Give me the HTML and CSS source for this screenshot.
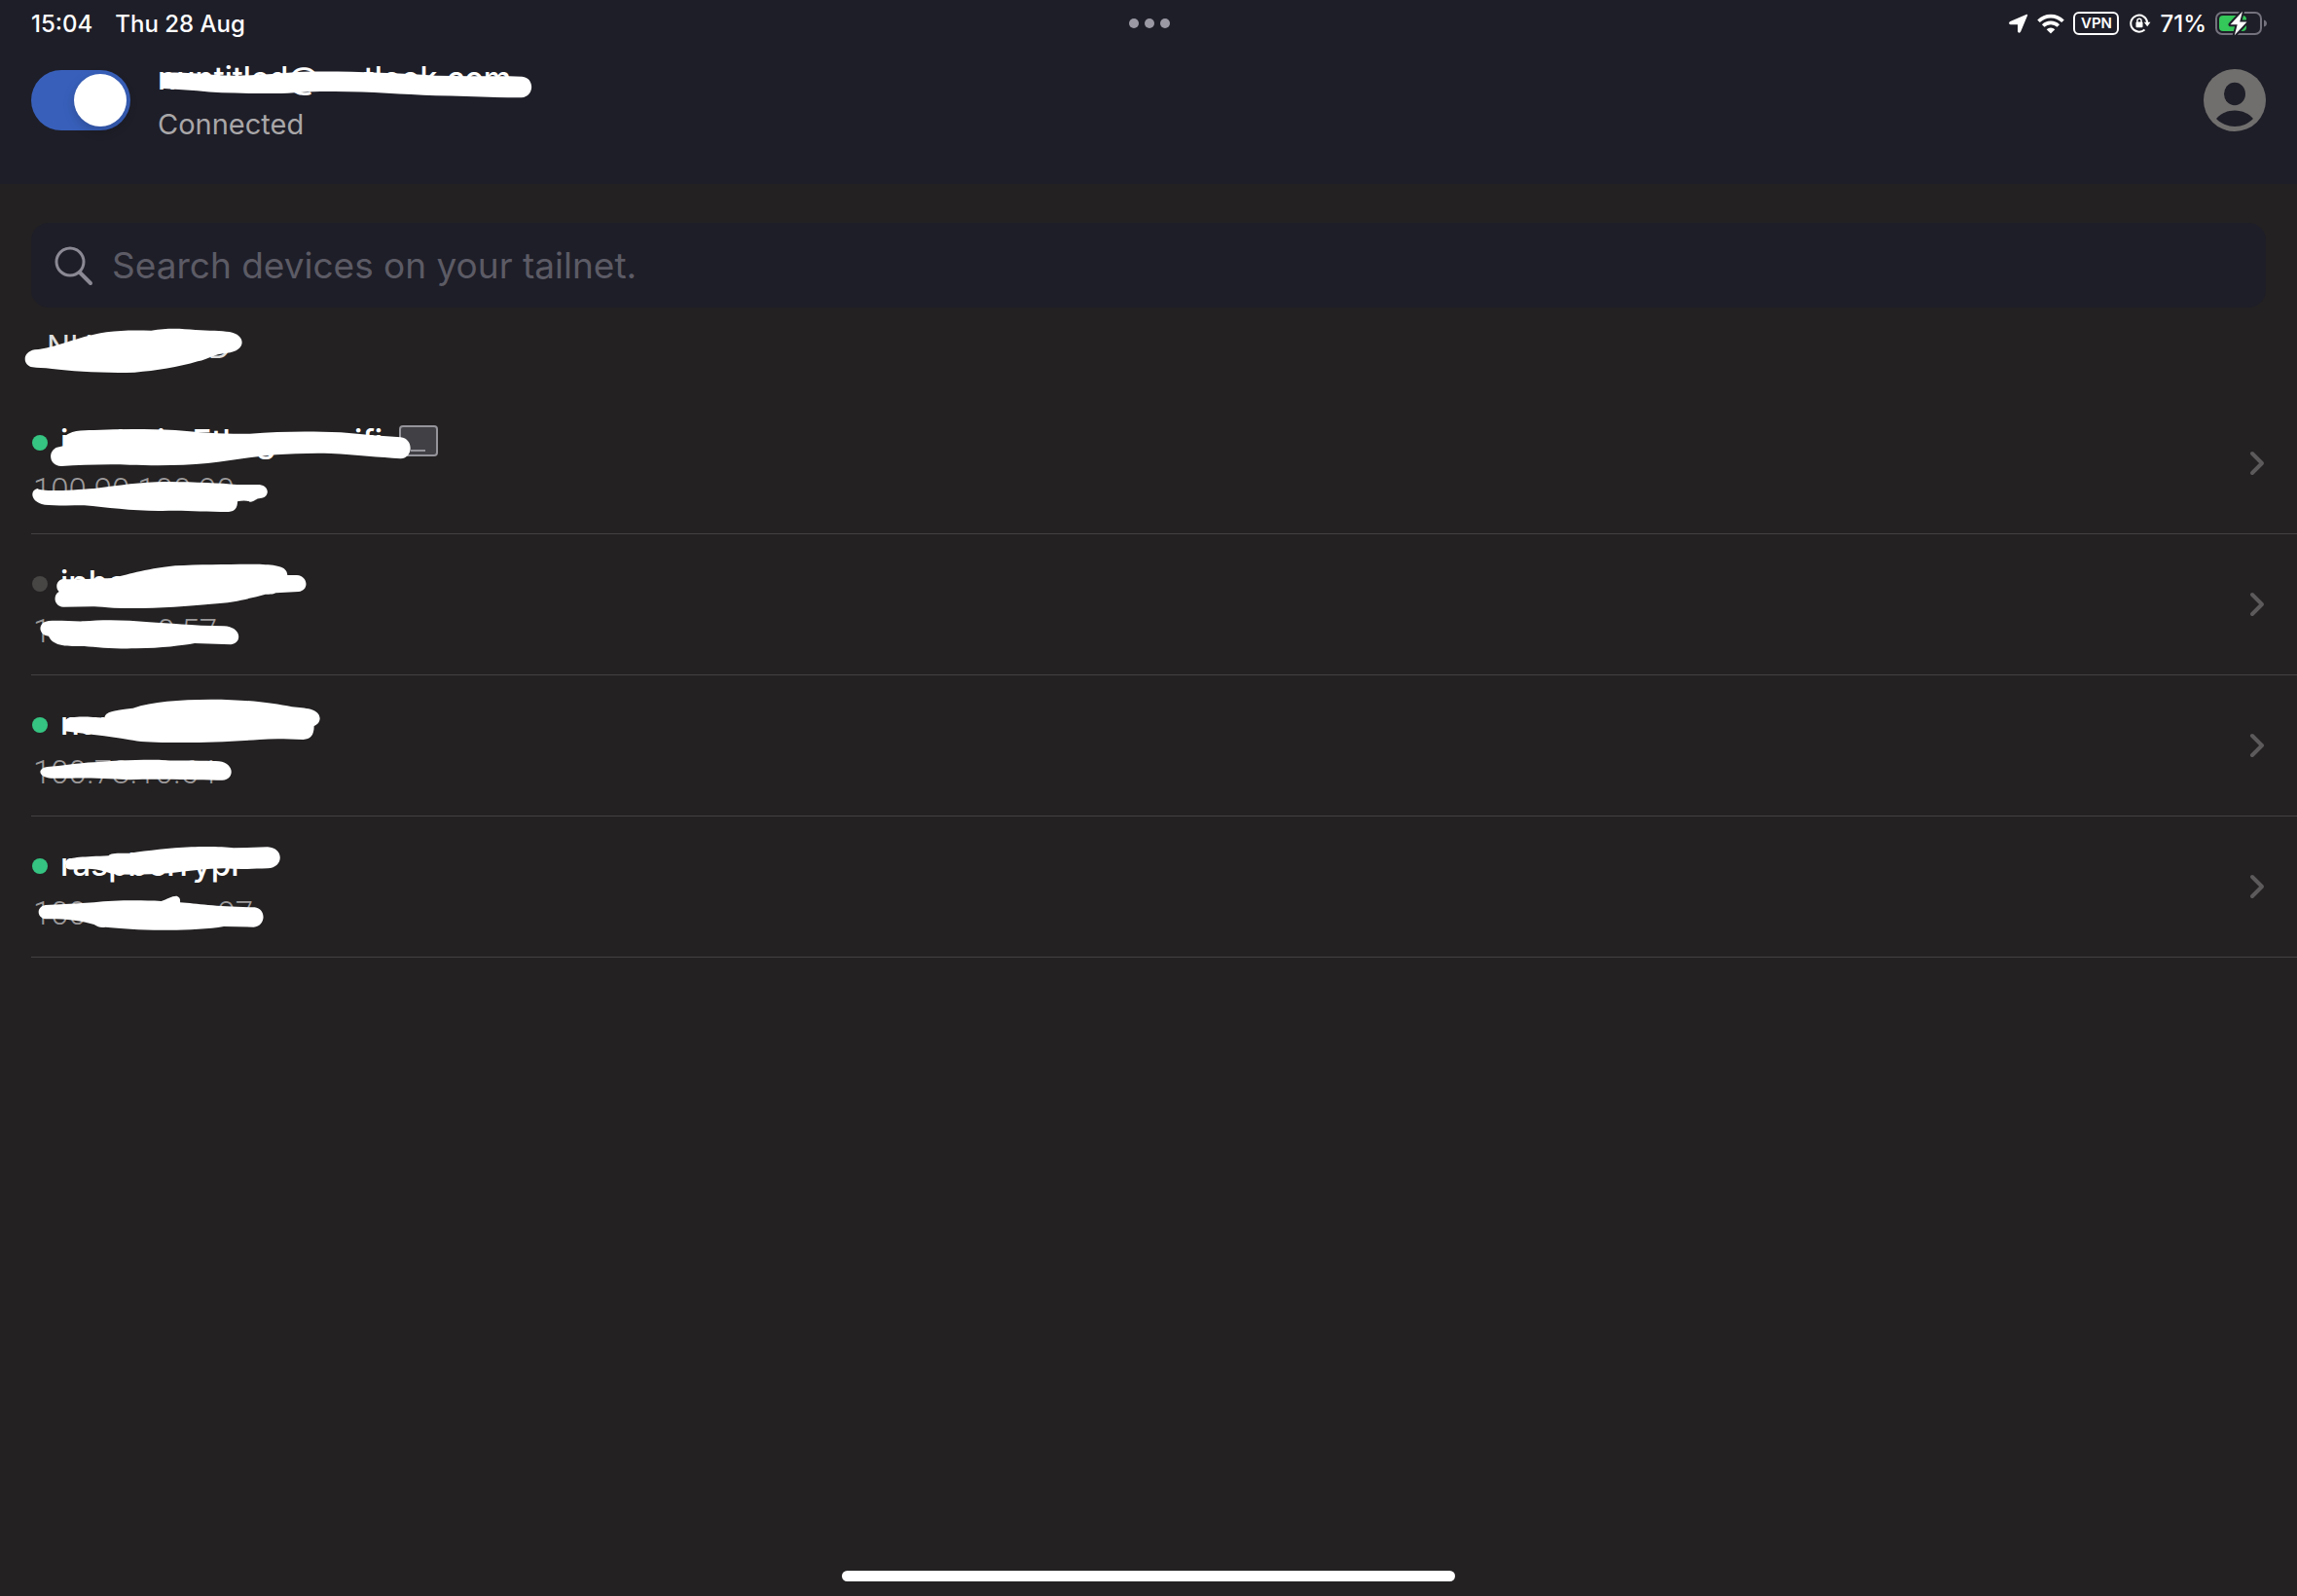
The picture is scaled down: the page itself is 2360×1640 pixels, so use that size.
FILE: index.html
```html
<!DOCTYPE html>
<html lang="en">
<head>
    <meta charset="utf-8">
    <meta name="viewport" content="width=device-width, initial-scale=1">
    <title>Devices</title>
    <link rel="stylesheet" href="styles.css">
</head>
<body>
    <header class="header">
        <div class="status">
            <div class="status-left"><span>15:04</span><span>Thu 28 Aug</span></div>
            <div class="dots"><i></i><i></i><i></i></div>
            <div class="status-right">
                <svg class="ic-location" width="20" height="20" viewBox="0 0 20 20"><path d="M18.500 1.500 11.500 18.300c-.4 1-1.800 .8-1.800-.3V10.500H1.900C.6 10.500.5 9.200 1.600 8.700z" fill="#fff" stroke="#fff" stroke-width="1.400" stroke-linejoin="round"/></svg>
                <svg class="ic-wifi" width="28" height="21" viewBox="0 0 28 21"><g fill="none" stroke="#fff" stroke-width="3.600"><path d="M1.500 7.800a17.600 17.600 0 0 1 25 0"/><path d="M6.200 12.600a11 11 0 0 1 15.600 0"/></g><path d="M14 20.500l-4.300-4.300a6.200 6.200 0 0 1 8.600 0z" fill="#fff"/></svg>
                <span class="vpn">VPN</span>
                <svg class="ic-lock" width="22" height="20" viewBox="0 0 22 20"><path d="M15.500 16.400A8.500 8.500 0 1 1 18.200 9" fill="none" stroke="#fff" stroke-width="2"/><path d="M14.800 8.800h6.700l-3.300 4.500z" fill="#fff"/><rect x="6.500" y="8.500" width="7" height="5.800" rx="1" fill="#fff"/><path d="M7.900 9V7.400a2.100 2.100 0 0 1 4.200 0V9" fill="none" stroke="#fff" stroke-width="1.400"/></svg>
                <span class="percent">71%</span>
                <svg class="ic-battery" width="54" height="26" viewBox="0 0 54 26"><rect x="1" y="2" width="46" height="22" rx="6" fill="none" stroke="#74737d" stroke-width="2"/><path d="M50 9.500c2 .5 3 2 3 3.500s-1 3-3 3.500z" fill="#74737d"/><rect x="4" y="5" width="28" height="16" rx="4" fill="#34c759"/><path d="M28 .8 15.500 14.200h7.200L19.800 25.200 32.500 11.600h-7.300z" fill="#fff" stroke="#1e1e28" stroke-width="4" stroke-linejoin="round" paint-order="stroke"/></svg>
            </div>
        </div>
        <div class="account">
            <input type="checkbox" class="switch" id="vpn-switch" checked>
            <label class="account-text" for="vpn-switch">
                <span class="account-name">nuntitled@&emsp;&nbsp;&thinsp;tlook.com</span>
                <span class="account-state">Connected</span>
            </label>
            <button type="button" class="avatar" aria-label="Account">
                <svg width="64" height="64" viewBox="0 0 64 64"><circle cx="32" cy="32" r="32" fill="#716f6e"/><ellipse cx="32" cy="25.500" rx="11" ry="11.800" fill="#1e1e28"/><path d="M13 51c4-5 11-8.500 19-8.500S47 46 51 51c-5 5-11.500 8-19 8s-14-3-19-8z" fill="#1e1e28"/></svg>
            </button>
        </div>
        <svg class="mark mark-header" viewBox="0 0 1568 600" preserveAspectRatio="none"><path d="M432 225C470 221 520 225 570 230C650 238 720 228 800 222C900 218 1050 224 1170 233C1260 236 1340 234 1402 236C1436 239 1436 298 1400 301C1330 301 1250 296 1170 295C1080 291 1000 282 900 282C840 280 790 287 740 288C660 288 590 288 530 280L432 272z"/></svg>
    </header>

    <main class="content">
        <div class="search">
            <svg width="40" height="42" viewBox="0 0 40 42" fill="none" stroke="#8a8994" stroke-linecap="round"><circle cx="16" cy="17" r="14" stroke-width="3"/><path d="M26 28l11 11" stroke-width="4"/></svg>
            <input type="search" aria-label="Search devices" placeholder="Search devices on your tailnet.">
        </div>

        <section class="devices">
            <h2 class="group">NU&emsp;&emsp;&emsp;&ensp;&thinsp;D
                <svg class="mark mark-group" viewBox="0 318 1568 264" preserveAspectRatio="none"><path d="M80 448C130 444 170 410 245 394C280 387 315 388 348 389C390 380 420 384 450 387C480 389 510 390 528 393C568 402 567 453 522 458C490 462 480 477 455 484C410 502 360 513 310 518C240 521 170 515 120 507C100 504 85 504 75 502C51 495 51 455 80 448z"/></svg>
            </h2>
            <ul class="list">
                <li>
                    <a class="device" href="#">
                        <span class="info">
                            <span class="name"><i class="dot online"></i>i&emsp;&ensp;l&emsp;i&ensp;&thinsp;&thinsp;Eth&nbsp;&thinsp;g&emsp;&emsp;&thinsp;&nbsp;ifi<svg class="ssh" width="40" height="32" viewBox="0 0 40 32"><rect x="1" y="1" width="38" height="30" rx="3" fill="#404045" stroke="#95949b" stroke-width="2"/><path d="M12 26h15" stroke="#95949b" stroke-width="2"/></svg></span>
                            <span class="ip">100.90.100.90</span>
                        </span>
                        <svg class="chevron" width="18" height="28" viewBox="0 0 18 28"><path d="M4 4l10 10L4 24"/></svg>
                    </a>
                    <svg class="mark mark-row" viewBox="96 -18 1344 435"><path d="M195 120C215 96 250 97 290 96C370 92 450 92 540 96C620 104 690 108 770 107C860 100 950 98 1050 103C1120 110 1180 115 1235 118C1275 122 1275 182 1235 184C1170 180 1100 172 1020 168C960 166 900 169 850 172C780 177 710 191 640 198C560 206 470 205 400 203C320 200 250 204 190 207C146 208 146 150 185 147L195 145z"/><path d="M115 276C130 287 220 281 290 276C370 266 440 254 520 255C600 256 680 259 730 264L800 264C832 268 832 303 803 306C788 306 785 318 770 317C760 312 745 313 732 316C732 335 725 347 705 348C620 348 570 342 500 345C410 346 330 334 260 328C210 328 165 329 138 326C95 320 90 282 115 276z"/></svg>
                </li>
                <li>
                    <a class="device" href="#">
                        <span class="info">
                            <span class="name"><i class="dot"></i>ipho</span>
                            <span class="ip">1&emsp;&emsp;&emsp;&nbsp;0&thinsp;57</span>
                        </span>
                        <svg class="chevron" width="18" height="28" viewBox="0 0 18 28"><path d="M4 4l10 10L4 24"/></svg>
                    </a>
                    <svg class="mark mark-row" viewBox="96 -3 1344 435"><path d="M195 135C240 137 300 133 345 132C390 124 440 104 540 94C620 90 720 90 800 89C850 92 885 94 886 123L915 123C952 126 952 172 920 174L850 178C840 183 830 182 818 182C770 194 730 207 650 212C570 220 450 228 350 224C320 222 300 219 285 220L195 221C166 219 162 185 182 174C168 160 176 137 195 135z"/><path d="M150 264C180 261 220 266 260 265C310 260 390 260 460 268C520 271 590 279 690 280C745 282 748 333 712 337L600 333C560 340 500 348 420 349C360 351 300 346 260 342C210 341 165 345 150 311C117 308 115 268 150 264z"/></svg>
                </li>
                <li>
                    <a class="device" href="#">
                        <span class="info">
                            <span class="name"><i class="dot online"></i>nun</span>
                            <span class="ip">100.78.10.64</span>
                        </span>
                        <svg class="chevron" width="18" height="28" viewBox="0 0 18 28"><path d="M4 4l10 10L4 24"/></svg>
                    </a>
                    <svg class="mark mark-row" viewBox="96 -18 1344 435"><path d="M200 120C220 105 270 109 322 113C326 96 335 92 410 83C470 62 550 57 650 56C760 56 840 67 900 79C940 83 985 84 986 115C985 128 978 134 968 138C968 168 956 178 935 180C880 178 840 177 800 180C700 186 620 190 540 189C480 190 430 187 400 181C330 169 260 162 200 154z"/><path d="M145 264C190 262 240 252 290 250C360 243 430 242 490 242C530 246 600 243 660 246C725 243 727 304 685 305C620 306 500 300 400 304C330 300 270 298 220 299C180 299 160 301 145 297C117 290 117 268 145 264z"/></svg>
                </li>
                <li>
                    <a class="device" href="#">
                        <span class="info">
                            <span class="name"><i class="dot online"></i>raspberrypi</span>
                            <span class="ip">100&emsp;&emsp;&emsp;&emsp;97</span>
                        </span>
                        <svg class="chevron" width="18" height="28" viewBox="0 0 18 28"><path d="M4 4l10 10L4 24"/></svg>
                    </a>
                    <svg class="mark mark-row" viewBox="96 -3 1344 435"><path d="M205 135C215 121 260 122 335 118C340 109 360 110 400 110C460 102 520 94 590 91C650 89 690 91 720 94L825 91C877 94 875 155 825 157C770 159 730 160 690 157C640 158 580 165 520 172C460 176 400 178 345 174C330 168 310 160 270 158C235 159 205 165 203 152z"/><path d="M140 270C190 268 240 265 290 262C350 255 430 255 497 258C515 252 530 241 545 242C555 246 556 253 555 262C610 266 670 276 785 277C822 282 820 335 782 338L690 336C640 345 560 348 500 347C430 347 370 342 325 338C310 342 302 336 290 330C250 318 200 312 140 313C112 308 112 275 140 270z"/></svg>
                </li>
            </ul>
        </section>
    </main>

    <div class="home-bar"></div>
</body>
</html>
```
FILE: styles.css
```css
* {
    box-sizing: border-box;
}
body {
    margin: 0;
    min-height: 100vh;
    display: flex;
    flex-direction: column;
    background: #232122;
    color: #fff;
    font-family: Inter, "Liberation Sans", sans-serif;
}
svg {
    display: block;
    flex: none;
}

/* header */
.header {
    position: relative;
    background: #1e1e28;
}
.status {
    display: grid;
    grid-template-columns: 1fr auto 1fr;
    align-items: center;
    height: 48px;
    padding: 0 30px 0 32px;
    font-size: 24px;
    font-weight: 500;
}
.status-left {
    display: flex;
    gap: 23px;
}
.dots {
    display: flex;
    gap: 6px;
}
.dots i {
    width: 10px;
    height: 10px;
    border-radius: 50%;
    background: #9a99a4;
}
.status-right {
    display: flex;
    justify-content: flex-end;
    align-items: center;
    gap: 9px;
}
.vpn {
    width: 47px;
    height: 24px;
    margin-right: 2px;
    border: 2px solid #fff;
    border-radius: 6px;
    font-size: 15px;
    line-height: 20px;
    font-weight: 600;
    text-align: center;
}
.account {
    display: flex;
    align-items: center;
    padding: 6px 32px 37px;
}
.switch {
    appearance: none;
    flex: none;
    width: 102px;
    height: 62px;
    margin: 0 28px 0 0;
    padding: 4px;
    border-radius: 31px;
    background: #555;
}
.switch::before {
    content: "";
    display: block;
    width: 54px;
    height: 54px;
    border-radius: 50%;
    background: #fff;
    box-shadow: 0 4px 12px rgba(0, 0, 0, .2);
}
.switch:checked {
    background: #3860bb;
}
.switch:checked::before {
    margin-left: auto;
}
.account-text {
    flex: 1;
    display: flex;
    flex-direction: column;
    padding-top: 4px;
    line-height: 46px;
}
.account-name {
    font-size: 32px;
    font-weight: 500;
}
.account-state {
    color: #a9a7a8;
    font-size: 29px;
    line-height: 48px;
}
.avatar {
    padding: 0;
    border: 0;
    background: none;
}

/* white marker strokes */
.mark {
    position: absolute;
    top: 0;
    left: 0;
    fill: #fff;
    pointer-events: none;
}
.mark-header {
    width: 600px;
    height: 200px;
}
.mark-group {
    width: 700px;
    height: 88px;
}
.mark-row {
    width: 448px;
    height: 145px;
}

/* search */
.content {
    flex: 1;
    padding-top: 40px;
}
.search {
    display: flex;
    align-items: center;
    gap: 19px;
    height: 87px;
    margin: 0 32px;
    padding: 0 24px;
    border-radius: 18px;
    background: #1e1e28;
}
.search input {
    flex: 1;
    padding: 0;
    border: 0;
    outline: 0;
    background: none;
    color: #fff;
    font: 400 37px Inter, "Liberation Sans", sans-serif;
}
.search input::placeholder {
    color: #5c5b65;
    opacity: 1;
}

/* device list */
.group {
    position: relative;
    margin: 0;
    padding: 0 48px 6px;
    color: #dedede;
    font-size: 32px;
    line-height: 82px;
    font-weight: 400;
}
.list {
    margin: 0 0 0 32px;
    padding: 0;
    list-style: none;
}
.list li {
    position: relative;
    border-bottom: 1px solid #434142;
}
.device {
    display: flex;
    align-items: center;
    padding: 18px 32px 18px 0;
    color: #fff;
    text-decoration: none;
}
.info {
    flex: 1;
    display: flex;
    flex-direction: column;
    padding-top: 6px;
}
.name {
    display: flex;
    align-items: center;
    font-size: 33px;
    line-height: 50px;
    font-weight: 500;
}
.dot {
    width: 16px;
    height: 16px;
    margin: 4px 13px 0 1px;
    border-radius: 50%;
    background: #474645;
}
.dot.online {
    background: #35c481;
}
.ssh {
    margin-left: 17px;
}
.ip {
    padding-left: 2px;
    color: #9c9a9b;
    font: 300 33px/52px Roboto, "Liberation Sans", sans-serif;
}
.chevron path {
    fill: none;
    stroke: #5c5a5b;
    stroke-width: 4;
    stroke-linecap: round;
    stroke-linejoin: round;
}

.home-bar {
    width: 630px;
    height: 11px;
    margin: 0 auto 15px;
    border-radius: 6px;
    background: #fff;
}
```
